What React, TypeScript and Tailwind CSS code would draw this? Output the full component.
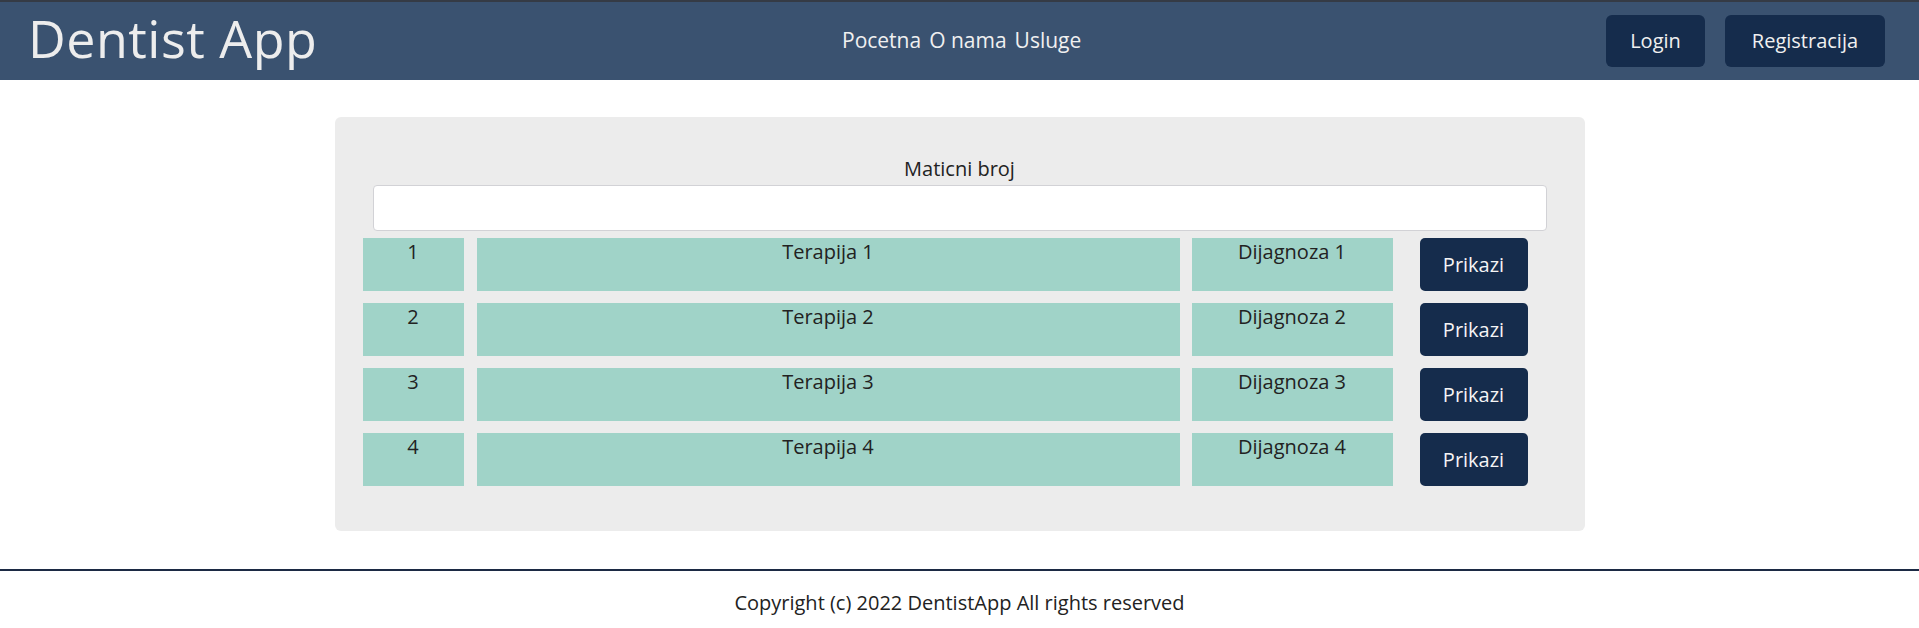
import React from "react";

const rows = [
  { id: 1, terapija: "Terapija 1", dijagnoza: "Dijagnoza 1" },
  { id: 2, terapija: "Terapija 2", dijagnoza: "Dijagnoza 2" },
  { id: 3, terapija: "Terapija 3", dijagnoza: "Dijagnoza 3" },
  { id: 4, terapija: "Terapija 4", dijagnoza: "Dijagnoza 4" },
];

const Header = () => {
  return (
    <header className="flex h-[80px] items-center justify-between border-t-2 border-[#353b45] bg-[#3a5270] pl-[28px] pr-[34px]">
      <h1 className="-mt-[6px] text-[52px] leading-none tracking-[0.5px] text-[#ededed]">
        Dentist App
      </h1>
      <nav className="flex gap-[8px] text-[21px] text-[#f0f0f0]">
        <a href="#">Pocetna</a>
        <a href="#">O nama</a>
        <a href="#">Usluge</a>
      </nav>
      <div className="flex gap-[20px] text-[20px]">
        <button className="h-[52px] w-[99px] rounded-[6px] bg-[#152c4c] text-[#f0f0f0]">
          Login
        </button>
        <button className="h-[52px] w-[160px] rounded-[6px] bg-[#152c4c] text-[#f0f0f0]">
          Registracija
        </button>
      </div>
    </header>
  );
};

const Row = ({ id, terapija, dijagnoza }: (typeof rows)[number]) => {
  return (
    <div className="flex h-[53px] items-stretch">
      <div className="w-[101px] bg-[#a0d3c8] text-center leading-[27px]">
        {id}
      </div>
      <div className="ml-[13px] w-[703px] bg-[#a0d3c8] text-center leading-[27px]">
        {terapija}
      </div>
      <div className="ml-[12px] w-[201px] bg-[#a0d3c8] text-center leading-[27px]">
        {dijagnoza}
      </div>
      <button className="ml-[27px] w-[108px] rounded-[5px] bg-[#152c4c] text-[#f5f5f5]">
        Prikazi
      </button>
    </div>
  );
};

export default function App() {
  return (
    <div
      className="min-h-screen bg-white text-[20px] text-[#222]"
      style={{ fontFamily: '"Open Sans", "DejaVu Sans", sans-serif' }}
    >
      <Header />
      <main className="pb-[38px] pt-[37px]">
        <div className="mx-auto w-[1250px] rounded-[6px] bg-[#ececec] px-[28px] pb-[45px] pt-[38px]">
          <div className="flex flex-col px-[10px]">
            <label className="text-center leading-[27px] text-[#222]">
              Maticni broj
            </label>
            <input
              className="mt-[3px] h-[46px] rounded-[4px] border border-[#d2d2d6] bg-white px-3 outline-none"
              type="text"
            />
          </div>
          <div className="mt-[7px] flex flex-col gap-[12px]">
            {rows.map((r) => (
              <Row key={r.id} {...r} />
            ))}
          </div>
        </div>
      </main>
      <footer className="border-t-2 border-[#1c2a44] pt-[17px] text-center text-[#222]">
        Copyright (c) 2022 DentistApp All rights reserved
      </footer>
    </div>
  );
}
